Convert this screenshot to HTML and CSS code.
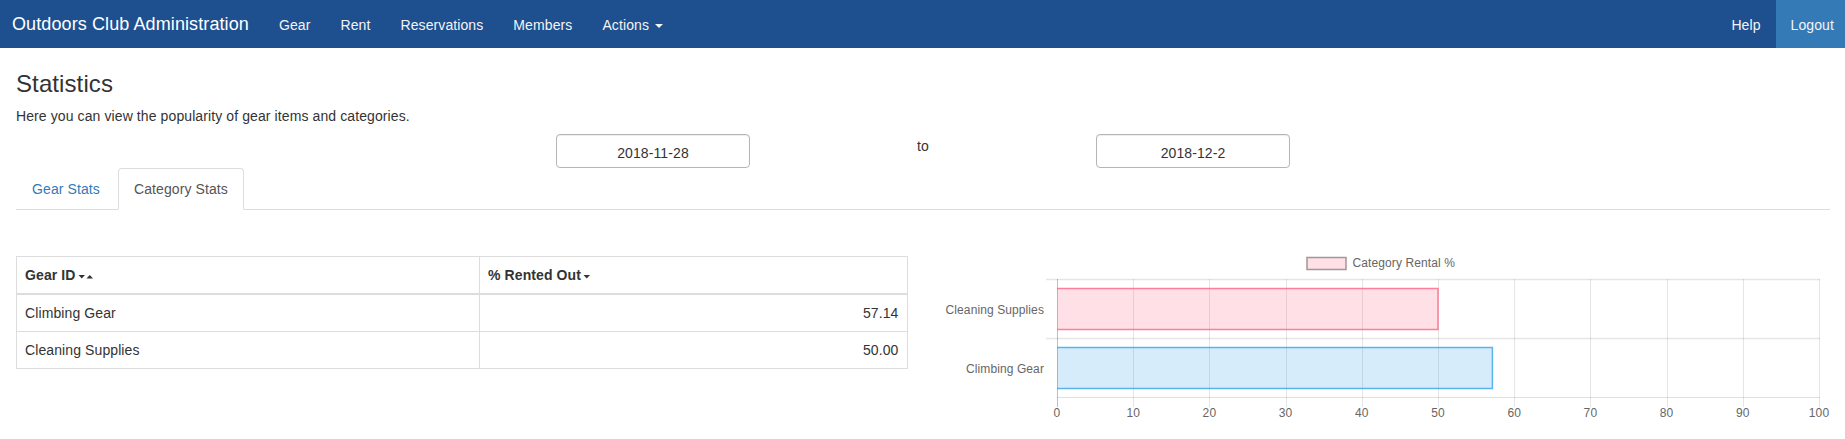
FILE: index.html
```html
<!DOCTYPE html>
<html lang="en">
<head>
<meta charset="utf-8">
<title>Statistics - Outdoors Club Administration</title>
<link rel="stylesheet" href="styles.css">
</head>
<body>
<nav class="navbar">
  <a class="brand" href="#">Outdoors Club Administration</a>
  <ul class="nav">
    <li><a href="#">Gear</a></li>
    <li><a href="#">Rent</a></li>
    <li><a href="#">Reservations</a></li>
    <li><a href="#">Members</a></li>
    <li><a href="#">Actions <span class="caret"></span></a></li>
  </ul>
  <ul class="nav nav-right">
    <li><a href="#">Help</a></li>
    <li class="active"><a href="#">Logout</a></li>
  </ul>
</nav>

<main class="container">
  <h3 class="title">Statistics</h3>
  <p class="intro">Here you can view the popularity of gear items and categories.</p>

  <div class="date-row">
    <input class="date-input" type="text" value="2018-11-28">
    <span class="date-to">to</span>
    <input class="date-input" type="text" value="2018-12-2">
  </div>

  <ul class="tabs">
    <li><a href="#">Gear Stats</a></li>
    <li class="active"><a href="#">Category Stats</a></li>
  </ul>

  <div class="tab-content">
    <div class="col">
      <table class="stats-table">
        <colgroup><col class="col-name"><col></colgroup>
        <thead>
          <tr>
            <th>Gear ID<svg class="sort-icon" width="16" height="6" viewBox="0 0 16 6"><path d="M0.5 1h6.5L3.75 4.5z"/><path d="M8.5 4.5h6.5L11.75 1z"/></svg></th>
            <th>% Rented Out<svg class="sort-icon" width="8" height="6" viewBox="0 0 8 6"><path d="M0.5 1h6.5L3.75 4.5z"/></svg></th>
          </tr>
        </thead>
        <tbody>
          <tr><td>Climbing Gear</td><td class="num">57.14</td></tr>
          <tr><td>Cleaning Supplies</td><td class="num">50.00</td></tr>
        </tbody>
      </table>
    </div>
    <div class="col">
      <svg class="chart" width="893" height="180" viewBox="0 0 893 180">
        <!-- legend -->
        <rect x="369" y="11.5" width="39" height="12" fill="rgba(255,99,132,0.2)" stroke="#a3959b" stroke-width="1.5"/>
        <text class="chart-text" x="414.5" y="21">Category Rental %</text>

        <!-- vertical grid lines -->
        <g stroke="rgba(0,0,0,0.1)" stroke-width="1">
          <line x1="195.5" y1="33" x2="195.5" y2="161"/>
          <line x1="271.5" y1="33" x2="271.5" y2="161"/>
          <line x1="348.5" y1="33" x2="348.5" y2="161"/>
          <line x1="424.5" y1="33" x2="424.5" y2="161"/>
          <line x1="500.5" y1="33" x2="500.5" y2="161"/>
          <line x1="576.5" y1="33" x2="576.5" y2="161"/>
          <line x1="652.5" y1="33" x2="652.5" y2="161"/>
          <line x1="729.5" y1="33" x2="729.5" y2="161"/>
          <line x1="805.5" y1="33" x2="805.5" y2="161"/>
          <line x1="881.5" y1="33" x2="881.5" y2="161"/>
        </g>
        <!-- horizontal grid lines -->
        <g stroke="rgba(0,0,0,0.1)" stroke-width="1.5">
          <line x1="108" y1="33.5" x2="882" y2="33.5"/>
          <line x1="108" y1="92.5" x2="882" y2="92.5"/>
        </g>
        <line x1="119" y1="151.5" x2="882" y2="151.5" stroke="rgba(0,0,0,0.12)" stroke-width="1"/>
        <line x1="119.5" y1="33" x2="119.5" y2="161" stroke="rgba(0,0,0,0.25)" stroke-width="1"/>

        <!-- bars -->
        <rect x="119" y="42.5" width="381" height="41" fill="rgba(255,99,132,0.2)"/>
        <path d="M119 42.5H500V83.5H119" fill="none" stroke="rgb(255,99,132)" stroke-width="1.5" opacity="0.8"/>
        <rect x="119" y="101.5" width="435.4" height="41" fill="rgba(54,162,235,0.2)"/>
        <path d="M119 101.5H554.4V142.5H119" fill="none" stroke="rgb(54,162,235)" stroke-width="1.5" opacity="0.8"/>

        <!-- y labels -->
        <text class="chart-text" x="106" y="67.5" text-anchor="end">Cleaning Supplies</text>
        <text class="chart-text" x="106" y="126.5" text-anchor="end">Climbing Gear</text>

        <!-- x labels -->
        <g class="chart-text" text-anchor="middle">
          <text x="119" y="171">0</text>
          <text x="195.2" y="171">10</text>
          <text x="271.4" y="171">20</text>
          <text x="347.6" y="171">30</text>
          <text x="423.8" y="171">40</text>
          <text x="500" y="171">50</text>
          <text x="576.2" y="171">60</text>
          <text x="652.4" y="171">70</text>
          <text x="728.6" y="171">80</text>
          <text x="804.8" y="171">90</text>
          <text x="881" y="171">100</text>
        </g>
      </svg>
    </div>
  </div>
</main>
</body>
</html>
```

FILE: styles.css
```css
* {
  box-sizing: border-box;
}

html, body {
  margin: 0;
  padding: 0;
}

body {
  font-family: "Liberation Sans", Arial, Helvetica, sans-serif;
  font-size: 14px;
  line-height: 20px;
  letter-spacing: 0.1px;
  color: #333;
  background: #fff;
  overflow: hidden;
}

a {
  text-decoration: none;
}

/* ---------- navbar ---------- */
.navbar {
  display: flex;
  align-items: stretch;
  height: 48px;
  background: #1e4f8f;
}

.brand {
  display: block;
  padding: 0 15px 0 12px;
  font-size: 18px;
  line-height: 48px;
  color: #fff;
}

.nav {
  display: flex;
  list-style: none;
  margin: 0;
  padding: 0;
}

.nav a {
  display: block;
  height: 48px;
  padding: 2px 15px 0;
  line-height: 46px;
  color: #f4f4f4;
}

.nav-right {
  margin-left: auto;
}

.nav-right .active a {
  background: #337ab7;
  padding-right: 11px;
}

.caret {
  display: inline-block;
  width: 0;
  height: 0;
  margin-left: 2px;
  vertical-align: middle;
  border-top: 4px solid #f4f4f4;
  border-left: 4px solid transparent;
  border-right: 4px solid transparent;
}

/* ---------- page ---------- */
.container {
  padding: 0 15px 0 16px;
}

.title {
  margin: 23px 0 9px;
  font-size: 24px;
  font-weight: 500;
  line-height: 1.1;
}

.intro {
  margin: 0 0 8px;
}

.date-row {
  display: grid;
  grid-template-columns: repeat(3, 270px);
  justify-content: center;
  justify-items: center;
  align-items: start;
}

.date-input {
  width: 194px;
  height: 34px;
  margin: 0;
  padding: 8px 12px 4px;
  font-family: "Liberation Sans", Arial, Helvetica, sans-serif;
  font-size: 14px;
  line-height: 20px;
  letter-spacing: 0.1px;
  color: #333;
  text-align: center;
  background: #fff;
  border: 1px solid #b5b5b5;
  border-radius: 4px;
  box-shadow: inset 0 1px 1px rgba(0, 0, 0, 0.075);
}

.date-to {
  margin-top: 2px;
  line-height: 20px;
}

/* ---------- tabs ---------- */
.tabs {
  display: flex;
  list-style: none;
  margin: 0;
  padding: 0;
  border-bottom: 1px solid #ddd;
}

.tabs li {
  margin-bottom: -1px;
}

.tabs a {
  display: block;
  margin-right: 2px;
  padding: 10px 15px;
  line-height: 20px;
  color: #337ab7;
  border: 1px solid transparent;
  border-radius: 4px 4px 0 0;
}

.tabs .active a {
  color: #555;
  background: #fff;
  border-color: #ddd #ddd transparent;
}

/* ---------- content ---------- */
.tab-content {
  display: flex;
  margin: 36px -15px 0 -16px;
}

.col {
  width: 50%;
  padding: 0 15px 0 16px;
}

.col + .col {
  padding: 0 15px;
}

.stats-table {
  width: 100%;
  margin-top: 10px;
  border-collapse: collapse;
  border: 1px solid #ddd;
}

.col-name {
  width: 52%;
}

.stats-table th,
.stats-table td {
  padding: 8px;
  line-height: 20px;
  text-align: left;
  vertical-align: top;
  border: 1px solid #ddd;
}

.stats-table th {
  font-weight: bold;
  border-bottom-width: 2px;
}

.stats-table td.num {
  text-align: right;
}

.sort-icon {
  margin-left: 2px;
  vertical-align: middle;
  fill: #333;
}

.chart {
  display: block;
}

.chart-text {
  font-family: "Liberation Sans", Arial, Helvetica, sans-serif;
  font-size: 12px;
  fill: #666;
}
```
